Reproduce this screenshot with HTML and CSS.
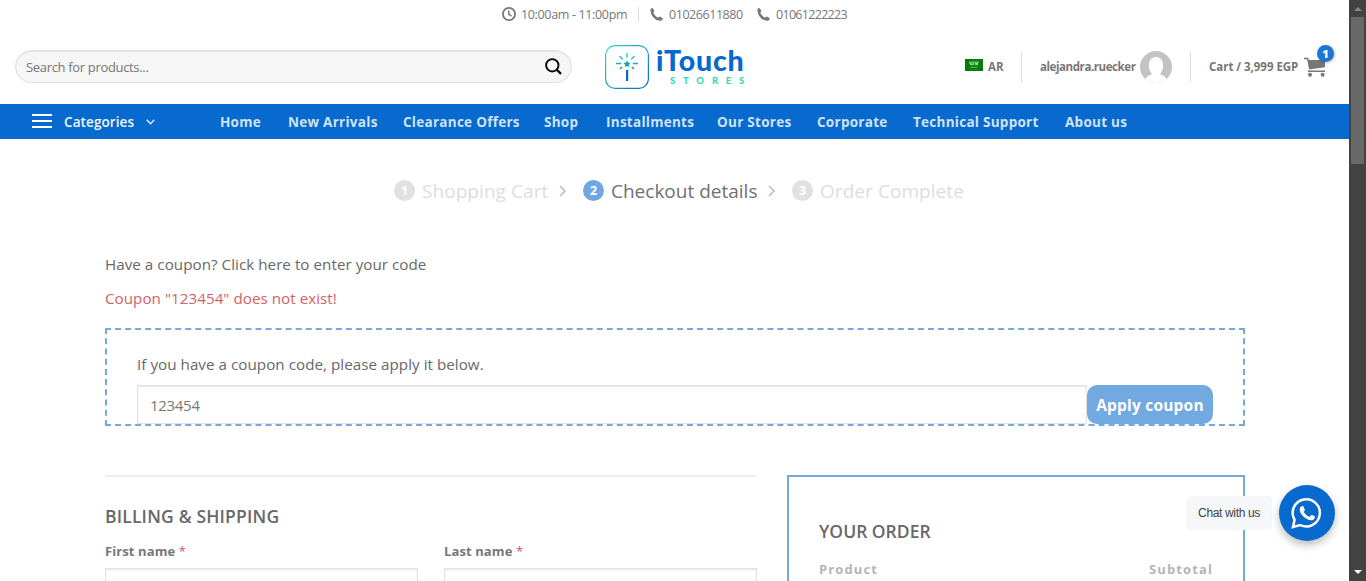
FILE: index.html
```html
<!DOCTYPE html>
<html lang="en">
<head>
<meta charset="utf-8">
<title>Checkout - iTouch Stores</title>
<link rel="stylesheet" href="styles.css">
</head>
<body>
<div class="window">
<div class="page">
  <div class="topbar">
    <svg class="clock" width="14" height="14" viewBox="0 0 14 14" fill="none" stroke="#777" stroke-width="1.8"><circle cx="7" cy="7" r="6.1"/><path d="M6.8 3.5v3.7l2.6 2" stroke-width="1.5"/></svg>
    <span class="hours">10:00am - 11:00pm</span>
    <i class="rule short"></i>
    <svg class="phone" width="13" height="13" viewBox="0 0 13 13" fill="#777"><path d="M.4 2.2Q0 1 1.2.4Q2.4-.3 3.1.7L4.3 3Q4.5 3.8 3.5 4.4L3.2 4.8Q5 8.4 8.1 9.7L8.8 8.9Q9.4 8.1 10.3 8.7L12.4 10Q13.2 10.8 12.4 11.8Q11.5 13.1 9.6 12.8Q1.3 11.3.4 2.2Z"/></svg>
    <span class="tel first">01026611880</span>
    <svg class="phone" width="13" height="13" viewBox="0 0 13 13" fill="#777"><path d="M.4 2.2Q0 1 1.2.4Q2.4-.3 3.1.7L4.3 3Q4.5 3.8 3.5 4.4L3.2 4.8Q5 8.4 8.1 9.7L8.8 8.9Q9.4 8.1 10.3 8.7L12.4 10Q13.2 10.8 12.4 11.8Q11.5 13.1 9.6 12.8Q1.3 11.3.4 2.2Z"/></svg>
    <span class="tel">01061222223</span>
  </div>

  <header class="masthead">
    <div class="search">
      <span class="search-text">Search for products...</span>
      <svg width="17" height="17" viewBox="0 0 17 17" fill="none" stroke="#000" stroke-width="1.9"><circle cx="7.3" cy="7.3" r="6.2"/><path d="M11.5 11.5l4.5 4.4" stroke-width="2.2"/></svg>
    </div>
    <div class="logo">
      <svg width="44" height="44" viewBox="0 0 44 44" fill="none">
        <defs>
          <linearGradient id="frame" x1="0" y1="0" x2="1" y2="1"><stop offset="0" stop-color="#30dcb0"/><stop offset="1" stop-color="#0668d2"/></linearGradient>
          <linearGradient id="spark" gradientUnits="userSpaceOnUse" x1="22" y1="8" x2="22" y2="36"><stop offset="0" stop-color="#30dcb0"/><stop offset="1" stop-color="#0058cc"/></linearGradient>
        </defs>
        <rect x=".6" y=".6" width="42.8" height="42.8" rx="9.5" stroke="url(#frame)" stroke-width="1.2"/>
        <path d="M22 8v4.500M14.500 11l3.200 3.300M29.500 11l-3.200 3.300M11 18.600h5.200M27.800 18.600H33M15 23.800l2.200-1.800M29 23.800L26.800 22" stroke="url(#spark)" stroke-width="1.500"/>
        <path d="M22 15.400l1.100 2.200 2.400.4-1.700 1.700.4 2.400-2.200-1.100-2.200 1.100.4-2.400-1.700-1.700 2.400-.4z" fill="#16a5bd"/>
        <rect x="21" y="25" width="2.200" height="11" fill="#0868d0"/>
      </svg>
      <div class="logo-words"><span class="brand">iTouch</span><span class="stores">STORES</span></div>
    </div>
    <div class="account">
      <svg class="flag" width="18" height="12" viewBox="0 0 18 12"><rect width="18" height="12" fill="#007c08"/><path d="M4 3.200h10M4.500 4.500h2m1 0h1.500m1 0h3M5 5.600h4m1 0h3" stroke="#b9ddb8" stroke-width=".9"/><path d="M5.500 8.300h7" stroke="#8fc690" stroke-width=".8"/></svg>
      <span class="lang">AR</span>
      <i class="rule tall"></i>
      <span class="user">alejandra.ruecker</span>
      <svg class="avatar" width="32" height="32" viewBox="0 0 32 32"><clipPath id="round"><circle cx="16" cy="16" r="16"/></clipPath><g clip-path="url(#round)"><rect width="32" height="32" fill="#c3c3c3"/><path d="M4 32Q5 25 12 23.200Q8.700 19.500 8.900 14C9 8.800 12 6 16 6s7 2.800 7.100 8Q23.300 19.500 20 23.200Q27 25 28 32Z" fill="#fff"/></g></svg>
      <i class="rule tall second"></i>
      <span class="cart-text">Cart / 3,999 EGP</span>
      <div class="cart">
        <svg width="22" height="20" viewBox="0 0 22 20" fill="#777"><path d="M0 .7h4.200l.6 2.300H21v7.300L5.100 12.500 3.100 2.200H0zM3.800 13.600H21v1.300H3.800z"/><circle cx="6" cy="17.700" r="2"/><circle cx="18.600" cy="17.700" r="2"/></svg>
        <b class="count">1</b>
      </div>
    </div>
  </header>

  <nav class="nav">
    <div class="categories">
      <i class="burger"></i><span>Categories</span>
      <svg width="9" height="6" viewBox="0 0 9 6" fill="none" stroke="#e6f0fa" stroke-width="1.400"><path d="M.7.700l3.800 4 3.800-4"/></svg>
    </div>
    <div class="menu">
      <a>Home</a><a>New Arrivals</a><a>Clearance Offers</a><a>Shop</a><a>Installments</a><a>Our Stores</a><a>Corporate</a><a>Technical Support</a><a>About us</a>
    </div>
  </nav>

  <div class="steps">
    <b class="num">1</b><span class="step one">Shopping Cart</span>
    <svg class="arrow" width="8" height="12" viewBox="0 0 8 12" fill="none" stroke="#bbb" stroke-width="1.500"><path d="M1 1l5 5-5 5"/></svg>
    <b class="num on">2</b><span class="step two">Checkout details</span>
    <svg class="arrow" width="8" height="12" viewBox="0 0 8 12" fill="none" stroke="#bbb" stroke-width="1.500"><path d="M1 1l5 5-5 5"/></svg>
    <b class="num">3</b><span class="step three">Order Complete</span>
  </div>

  <main class="content">
    <p class="line ask">Have a coupon? Click here to enter your code</p>
    <p class="line error">Coupon "123454" does not exist!</p>
    <section class="coupon">
      <p class="line hint">If you have a coupon code, please apply it below.</p>
      <div class="coupon-row"><div class="field code">123454</div><div class="apply">Apply coupon</div></div>
    </section>
    <div class="columns">
      <section class="billing">
        <h3>BILLING &amp; SHIPPING</h3>
        <div class="names">
          <div><label class="fn">First name <em>*</em></label><div class="field"></div></div>
          <div><label class="ln">Last name <em>*</em></label><div class="field"></div></div>
        </div>
      </section>
      <section class="order">
        <h3>YOUR ORDER</h3>
        <div class="order-head"><span class="prod">Product</span><span class="sub">Subtotal</span></div>
      </section>
    </div>
  </main>
</div>

<div class="scrollbar">
  <i class="up"></i><i class="thumb"></i><i class="down"></i>
</div>

<div class="chat">
  <span class="chat-label"><span>Chat with us</span></span>
  <span class="chat-button">
    <svg width="32" height="32" viewBox="0 0 32 32" fill="none"><path d="M3.600 22.800A13.600 13.600 0 1 1 9.200 28L2 30Z" stroke="#fff" stroke-width="2.500"/><path d="M9.200 10.500Q10.500 8.400 12.300 9.200L13.900 12.700Q14 13.700 12.700 15Q14.900 18.700 18.500 20L20.200 18Q20.800 17.600 23.700 19.300Q24.500 21.300 22.200 22.800Q18.800 24.500 13.500 20.600Q7.200 15.200 9.200 10.500Z" fill="#fff"/></svg>
  </span>
</div>
</div>
</body>
</html>
```

FILE: styles.css
```css
* { box-sizing: border-box; }
body { margin: 0; overflow: hidden; font-family: "Open Sans", "Noto Sans", sans-serif; color: #777; background: #fff; }
p, h3 { margin: 0; }
i, em { font-style: normal; }
svg { display: block; flex: none; }
.window { display: flex; width: 1366px; height: 581px; overflow: hidden; }
.page { width: 1349px; height: 581px; overflow: hidden; }
span, a, label, p, h3, b { white-space: nowrap; }
.rule { width: 1px; background: #ddd; flex: none; }

.topbar { height: 30px; display: flex; align-items: center; padding-left: 502px; font-size: 12.5px; padding-bottom: 2px; }
.hours { width: 107px; margin-left: 5px; letter-spacing: -.34px; }
.short { height: 15px; margin: 0 11px 0 10px; }
.phone { margin-right: 6px; }
.tel { letter-spacing: -.45px; }
.tel:last-child { letter-spacing: -.7px; }
.tel.first { width: 88px; }

.masthead { height: 74px; display: flex; align-items: center; padding-left: 15px; }
.search { width: 557px; height: 33px; margin-bottom: 1px; border: 1px solid #ddd; border-radius: 17px; background: #f6f6f6; display: flex; align-items: center; justify-content: space-between; padding: 0 9px 0 10px; font-size: 13px; box-shadow: inset 0 1px 1px #0001; }
.search-text { letter-spacing: -.33px; }
.logo { display: flex; width: 360px; margin-left: 33px; align-items: center; }
.logo-words { margin-left: 7px; margin-top: -2px; display: flex; flex-direction: column; gap: 2px; font-family: Lato, sans-serif; font-weight: 900; }
.brand { font-size: 28.5px; line-height: 27px; color: #0668d0; letter-spacing: .8px; }
.stores { font-size: 9.5px; line-height: 9px; color: #30dcb5; letter-spacing: 7.8px; margin: 0 0 0 14px; }
.account { display: flex; align-items: center; font-size: 11.5px; font-weight: 700; }
.account > span { padding-bottom: 2px; }
.lang { width: 33px; margin-left: 5px; }
.flag { margin-bottom: 4px; }
.tall { height: 30px; margin-right: 18px; }
.user { width: 95px; letter-spacing: -.42px; }
.avatar { margin-left: 5px; }
.tall.second { margin-left: 18px; margin-right: 18px; }
.cart-text { width: 95px; letter-spacing: -.03px; }
.cart { position: relative; }
.cart svg { margin-left: 0; }
.count { position: absolute; left: 13px; top: -12px; width: 17px; height: 17px; border-radius: 50%; background: #1c76d2; color: #fff; font-size: 11px; line-height: 17px; text-align: center; box-shadow: 1px 1px 3px #0004; }

.nav { height: 35px; background: #0869cf; display: flex; align-items: center; padding-left: 32px; font-size: 13.5px; font-weight: 700; color: #cfe3f7; }
.categories { width: 188px; display: flex; align-items: center; color: #f3f8fd; font-weight: 600; letter-spacing: .1px; }
.categories span { width: 82px; }
.burger { width: 20px; height: 14px; margin: 0 12px 2px 0; border-top: 2px solid #fff; border-bottom: 2px solid #fff; background: linear-gradient(#fff, #fff) 0 4px / 100% 2px no-repeat; }
.menu { display: grid; grid-template-columns: 68px 115px 141px 62px 111px 100px 96px 152px 64px; letter-spacing: .27px; padding-top: 1px; }

.steps { display: flex; align-items: center; padding-left: 394px; height: 103px; font-size: 19px; color: #ddd; }
.num { width: 21px; height: 21px; border-radius: 50%; background: #e1e1e1; color: #fff; font-size: 13px; line-height: 21px; text-align: center; }
.num.on { background: #6fa8e0; }
.step { margin-left: 7px; letter-spacing: .06px; }
.one { width: 137px; }
.two { width: 157px; color: #707070; letter-spacing: 0; }
.arrow { margin-right: 16px; }

.content { width: 1140px; margin-left: 105px; padding-top: 5px; }
.line { font-size: 15.2px; line-height: 34px; color: #686868; letter-spacing: .035px; }
.error { color: #cf6268; }
.coupon { margin-top: 13px; height: 98px; border: 2px dashed #72a9e1; padding: 17px 30px 0; }
.hint { height: 38px; line-height: 34px; }
.coupon-row { display: flex; }
.field { height: 39px; border: 1px solid #e3e3e3; box-shadow: inset 0 1px 2px #0000001a; }
.code { flex: 1; padding-left: 12px; line-height: 39px; font-size: 15px; color: #777; letter-spacing: -.3px; }
.apply { width: 126px; height: 39px; border-radius: 10px; background: #72a9e1; color: #fff; font-weight: 700; font-size: 15.500px; letter-spacing: .2px; line-height: 41px; text-align: center; }
.columns { display: flex; gap: 30px; margin-top: 49px; }
.billing { width: 652px; border-top: 2px solid #ececec; padding-top: 26px; }
h3 { font-size: 17.500px; line-height: 26px; font-weight: 600; color: #686868; }
.billing h3 { letter-spacing: .18px; }
.names { display: grid; grid-template-columns: 313px 313px; column-gap: 26px; margin-top: 10px; }
label { display: block; height: 29px; line-height: 24px; font-size: 13px; font-weight: 700; letter-spacing: .1px; }
em { color: #d0575c; font-weight: 400; }
.order { width: 458px; height: 160px; border: 2px solid #72a9e1; padding: 41px 31px 0 30px; }
.order-head { display: flex; justify-content: space-between; margin-top: 13px; font-size: 13px; line-height: 24px; font-weight: 700; letter-spacing: 1.100px; color: #b5b5b5; }
.sub { margin-right: -1px; }

.scrollbar { width: 17px; height: 581px; background: #424242; display: flex; flex-direction: column; align-items: center; }
.up { margin-top: 7px; border: 4px solid transparent; border-top: 0; border-bottom-color: #888; height: 4px; }
.thumb { width: 13px; height: 147px; margin-top: 6px; background: #686868; }
.down { margin: auto 0 7px; border: 4px solid transparent; border-bottom: 0; border-top-color: #fff; height: 4px; }

.chat { position: absolute; left: 1186px; top: 485px; display: flex; align-items: center; gap: 7px; }
.chat-label { width: 86px; height: 34px; border-radius: 4px; background: #f5f7f9; color: #444; font: 12px/34px "Liberation Sans", sans-serif; letter-spacing: -.35px; text-align: center; }
.chat-button { width: 56px; height: 56px; border-radius: 50%; background: #0869cf; display: flex; align-items: center; justify-content: center; box-shadow: 0 4px 9px #0004; }
```
